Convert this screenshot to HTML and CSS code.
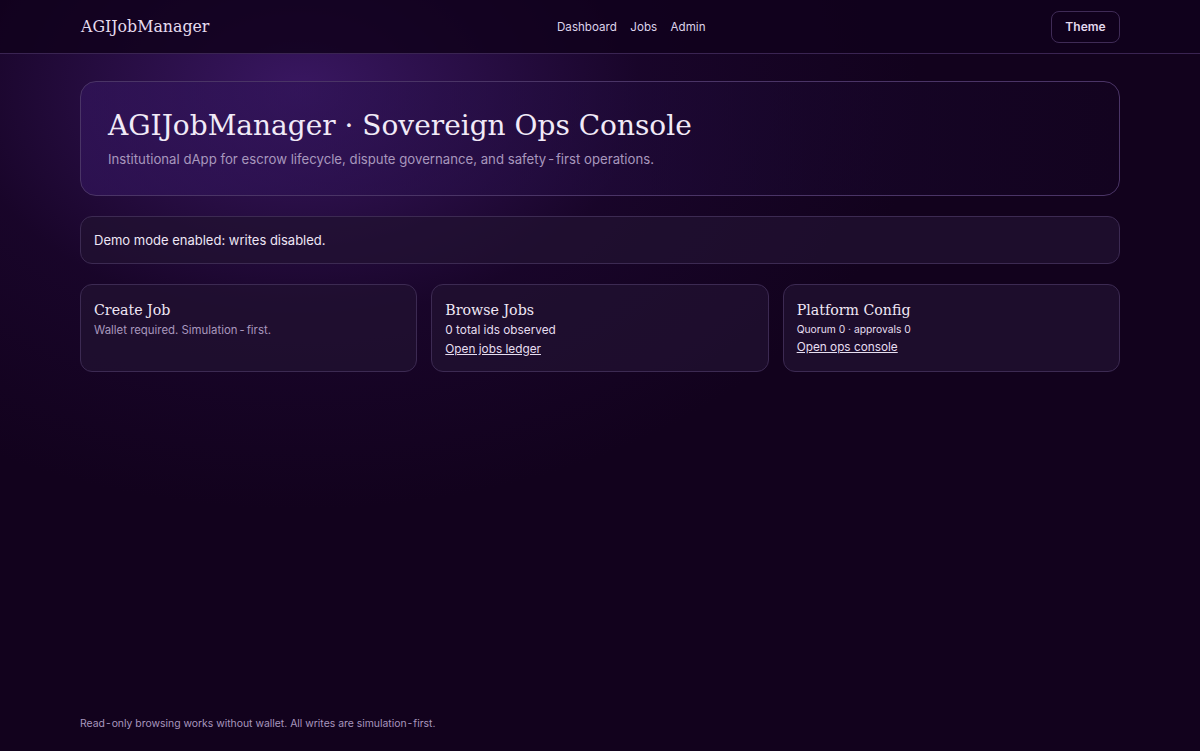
FILE: index.html
```html
<!DOCTYPE html>
<html lang="en">
<head>
<meta charset="utf-8">
<title>AGIJobManager</title>
<link rel="stylesheet" href="styles.css">
</head>
<body>
<div class="page">
  <header class="topbar">
    <div class="topbar-inner">
      <a class="brand" href="#">AGIJobManager</a>
      <nav class="nav">
        <a href="#">Dashboard</a>
        <a href="#">Jobs</a>
        <a href="#">Admin</a>
      </nav>
      <button class="theme-btn">Theme</button>
    </div>
  </header>
  <main class="main">
    <section class="hero">
      <h1>AGIJobManager · Sovereign Ops Console</h1>
      <p>Institutional dApp for escrow lifecycle, dispute governance, and safety<span class="hy">‑</span>first operations.</p>
    </section>
    <div class="banner">Demo mode enabled: writes disabled.</div>
    <div class="cards">
      <div class="card">
        <h2>Create Job</h2>
        <p class="muted">Wallet required. Simulation<span class="hy">‑</span>first.</p>
      </div>
      <div class="card">
        <h2>Browse Jobs</h2>
        <p>0 total ids observed</p>
        <a href="#">Open jobs ledger</a>
      </div>
      <div class="card">
        <h2>Platform Config</h2>
        <p class="small">Quorum 0 · approvals 0</p>
        <a href="#">Open ops console</a>
      </div>
    </div>
  </main>
  <footer class="footer">Read<span class="hy">‑</span>only browsing works without wallet. All writes are simulation<span class="hy">‑</span>first.</footer>
</div>
</body>
</html>
```
FILE: styles.css
```css
* { box-sizing: border-box; }
html, body { margin: 0; height: 100%; }
body {
  font-family: Inter, "Noto Sans", sans-serif;
  color: #ece4f4;
  background: #12021d;
  background-image: radial-gradient(ellipse 620px 420px at 300px 90px, rgba(70, 30, 120, 0.75), rgba(40, 12, 70, 0.3) 55%, rgba(18, 2, 29, 0) 100%);
}
.page { min-height: 751px; display: flex; flex-direction: column; }
.topbar {
  height: 54px;
  border-bottom: 1px solid #3a2452;
  background: rgba(16, 1, 28, 0.85);
}
.topbar-inner {
  width: 1040px; margin: 0 auto; height: 53px;
  display: flex; align-items: center;
}
.brand {
  font-family: "DejaVu Serif", serif;
  font-size: 15.8px;
  color: #e6dcef;
  text-decoration: none;
  width: 477px;
  padding-left: 1px;
}
.nav { display: flex; gap: 13.5px; }
.nav a { color: #ddd3ea; text-decoration: none; font-size: 11.6px; }
.theme-btn {
  margin-left: auto;
  width: 69px; height: 32px;
  background: transparent;
  border: 1px solid #3f2b56;
  border-radius: 8px;
  color: #e3d9ee;
  font-family: Inter, sans-serif;
  font-weight: 600;
  font-size: 12px;
}
.hy { margin: 0 2.5px; }
.main { width: 1040px; margin: 27px auto 0; flex: 1; }
.hero {
  height: 115px;
  border: 1px solid #4a3466;
  border-radius: 16px;
  padding: 24px 27px;
  background: linear-gradient(90deg, rgba(52, 22, 96, 0.6), rgba(26, 8, 48, 0.5) 70%, rgba(20, 4, 34, 0.5));
}
.hero h1 {
  margin: 0;
  font-family: "DejaVu Serif", serif;
  font-weight: 400;
  font-size: 28px;
  line-height: 40px;
  color: #f1eaf7;
}
.hero p { margin: 5px 0 0; font-size: 13.2px; color: #a897bd; }
.banner {
  margin-top: 20px;
  height: 48px;
  border: 1px solid #3c2a52;
  border-radius: 12px;
  background: rgba(34, 18, 50, 0.75);
  padding: 0 13px;
  display: flex; align-items: center;
  font-size: 13px;
  color: #eee6f5;
}
.cards {
  margin-top: 20px;
  display: grid;
  grid-template-columns: repeat(3, 1fr);
  gap: 14px;
}
.card {
  height: 88px;
  border: 1px solid #3c2a52;
  border-radius: 12px;
  background: rgba(34, 18, 50, 0.75);
  padding: 14px 13px;
}
.card h2 {
  margin: 0;
  font-family: "DejaVu Serif", serif;
  font-weight: 400;
  font-size: 14.2px;
  line-height: 22px;
  color: #efe7f5;
}
.card p { margin: 0; font-size: 11.8px; line-height: 19px; color: #e6def0; }
.card p.muted { color: #a897bd; font-size: 11.4px; }
.card p.small { font-size: 10.3px; line-height: 17px; }
.card a { display: block; font-size: 11.8px; line-height: 19px; color: #e6def0; text-decoration: underline; }
.footer {
  width: 1040px; margin: 0 auto;
  padding-bottom: 21px;
  font-size: 10.4px;
  color: #a897bd;
}
.footer .hy { margin: 0 1.5px; }
```
